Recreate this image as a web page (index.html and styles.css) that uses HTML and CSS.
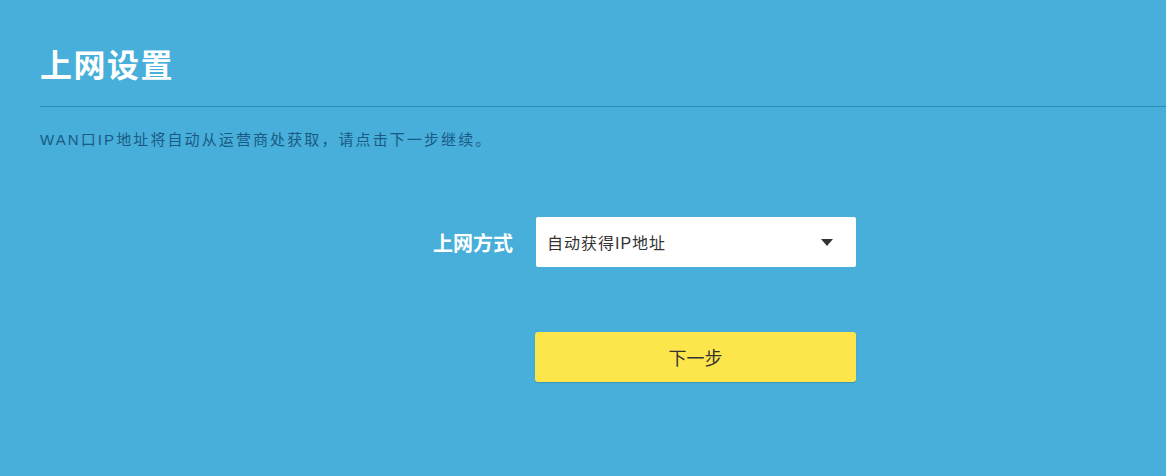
FILE: index.html
```html
<!DOCTYPE html>
<html lang="zh-CN">
<head>
    <meta charset="UTF-8">
    <meta name="viewport" content="width=device-width, initial-scale=1.0">
    <title>上网设置</title>
    <link rel="stylesheet" href="styles.css">
</head>
<body>
    <div id="app">
        <h1 class="pageTitle">上网设置</h1>
        <div class="divider"></div>
        <p class="tip">WAN口IP地址将自动从运营商处获取，请点击下一步继续。</p>

        <div class="formRow">
            <label class="formLabel">上网方式</label>
            <div class="selectBox">
                <span class="selectText">自动获得IP地址</span>
                <span class="selectArrow"></span>
            </div>
        </div>

        <div class="formRow buttonRow">
            <div class="formLabel"></div>
            <button class="nextBtn">下一步</button>
        </div>
    </div>
</body>
</html>
```

FILE: styles.css
```css
html, body {
    margin: 0;
    padding: 0;
}
body {
    background-color: #47afd9;
    font-family: "Liberation Sans", "Noto Sans CJK SC", sans-serif;
    height: 476px;
    overflow: hidden;
}
#app {
    padding-left: 40px;
}
.pageTitle {
    margin: 46px 0 0 0;
    font-size: 32px;
    line-height: 40px;
    font-weight: bold;
    color: #ffffff;
    letter-spacing: 1.5px;
}
.divider {
    margin-top: 20px;
    height: 1px;
    background-color: #2d8cb8;
}
.tip {
    margin: 21px 0 0 0;
    font-size: 15px;
    line-height: 24px;
    color: #1a5a85;
    letter-spacing: 2.1px;
}
.formRow {
    display: flex;
    align-items: center;
    margin-top: 65px;
}
.formLabel {
    width: 496px;
    padding-right: 23px;
    box-sizing: border-box;
    text-align: right;
    font-size: 20px;
    font-weight: bold;
    color: #ffffff;
}
.selectBox {
    width: 320px;
    height: 50px;
    box-sizing: border-box;
    background-color: #ffffff;
    border-radius: 2px;
    display: flex;
    align-items: center;
    justify-content: space-between;
    padding: 0 23px 0 11px;
}
.selectText {
    font-size: 16px;
    color: #333333;
    letter-spacing: 1px;
}
.selectArrow {
    width: 0;
    height: 0;
    border-left: 6px solid transparent;
    border-right: 6px solid transparent;
    border-top: 7px solid #333333;
}
.buttonRow .formLabel {
    width: 495px;
    padding-right: 0;
}
.nextBtn {
    width: 321px;
    height: 50px;
    border: none;
    border-radius: 3px;
    background-color: #fde64b;
    box-shadow: 0 1px 1px rgba(0, 0, 0, 0.15);
    font-family: "Liberation Sans", "Noto Sans CJK SC", sans-serif;
    font-size: 18px;
    color: #333333;
}
```
